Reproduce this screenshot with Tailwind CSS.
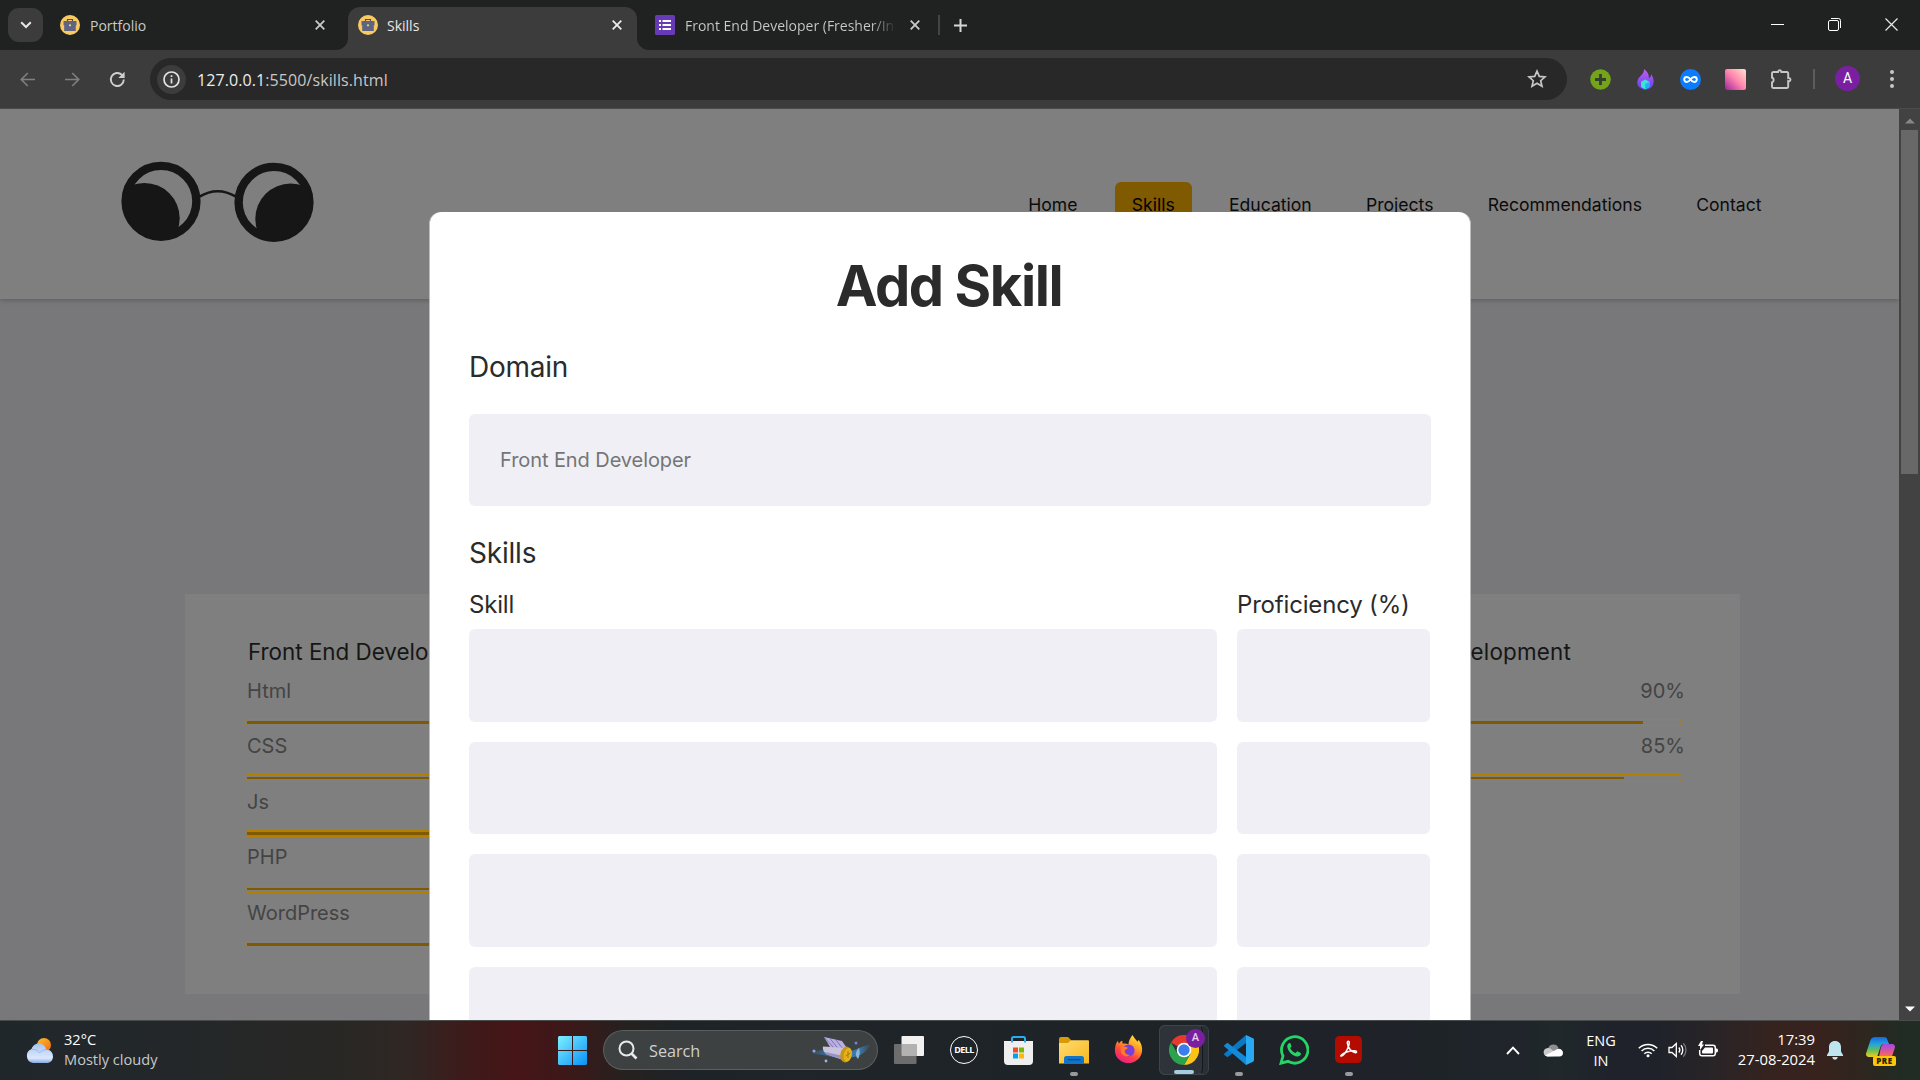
<!DOCTYPE html>
<html lang="en">
<head>
<meta charset="utf-8">
<title>Skills</title>
<script src="https://cdn.jsdelivr.net/npm/@tailwindcss/browser@4"></script>
</head>
<body class="flex h-[1080px] w-[1920px] flex-col overflow-hidden bg-[#3c3c3c] font-['Open_Sans','Noto_Sans',sans-serif]">

<!-- Tab strip -->
<header class="flex h-[50px] shrink-0 bg-[#202221] pl-2 text-[14px] leading-none text-[#c9cac9]">
  <button class="mt-2 flex h-[34px] w-[35px] items-center justify-center rounded-[11px] bg-[#3c3c3c]">
    <svg width="12" height="8" viewBox="0 0 12 8" fill="none" stroke="#e6e6e6" stroke-width="2"><path d="M1.2 1.2 6 6l4.800-4.800"/></svg>
  </button>
  <div class="flex h-[50px] w-[294px] items-center pl-[17px] pr-[11px]">
    <svg width="20" height="20" viewBox="0 0 20 20"><circle cx="10" cy="10" r="10" fill="#f9ca61"/><path d="M7.500 6V4.500h5V6" fill="none" stroke="#4a4f66" stroke-width="1.200"/><path d="M3.500 6h13v4.300h-.7V16H4.200v-5.700h-.7z" fill="#5f6580"/><circle cx="10" cy="10.300" r="1.100" fill="#f2d48a"/></svg>
    <span class="ml-2.5 grow pt-0.5">Portfolio</span>
    <svg class="mr-px" width="10" height="10" viewBox="0 0 10 10" stroke="#c9cac9" stroke-width="1.800"><path d="m.7.7 8.600 8.600M9.300.7.7 9.300"/></svg>
  </div>
  <div class="relative ml-[11px] mt-[7px] flex h-[43px] w-[289px] items-center rounded-t-[12px] bg-[#3c3c3c] pb-[7px] pl-[10px] pr-[15px] text-[#e8e8e8]">
    <svg class="absolute -left-3 bottom-0" width="12" height="12"><path d="M12 0v12H0A12 12 0 0 0 12 0" fill="#3c3c3c"/></svg>
    <svg class="absolute -right-3 bottom-0" width="12" height="12"><path d="M0 0v12h12A12 12 0 0 1 0 0" fill="#3c3c3c"/></svg>
    <svg width="20" height="20" viewBox="0 0 20 20"><circle cx="10" cy="10" r="10" fill="#f9ca61"/><path d="M7.500 6V4.500h5V6" fill="none" stroke="#4a4f66" stroke-width="1.200"/><path d="M3.500 6h13v4.300h-.7V16H4.200v-5.700h-.7z" fill="#5f6580"/><circle cx="10" cy="10.300" r="1.100" fill="#f2d48a"/></svg>
    <span class="ml-[9px] grow pt-0.5">Skills</span>
    <svg width="10" height="10" viewBox="0 0 10 10" stroke="#ececec" stroke-width="1.800"><path d="m.7.7 8.600 8.600M9.300.7.7 9.300"/></svg>
  </div>
  <div class="flex h-[50px] grow items-center pl-[18px]">
    <svg width="20" height="20" viewBox="0 0 20 20"><rect width="20" height="20" rx="1.500" fill="#673ab7"/><path d="M7.500 6H16M7.500 10H16M7.500 14H16" stroke="#fff" stroke-width="2"/><path d="M4 6h2M4 10h2M4 14h2" stroke="#fff" stroke-width="2"/></svg>
    <span class="ml-2.5 w-[211px] overflow-hidden whitespace-nowrap bg-linear-to-r from-[#c9cac9] from-88% to-transparent bg-clip-text pt-1.5 pb-1 text-transparent">Front End Developer (Fresher/Intern)</span>
    <svg class="ml-[14px]" width="10" height="10" viewBox="0 0 10 10" stroke="#c9cac9" stroke-width="1.800"><path d="m.7.7 8.600 8.600M9.300.7.7 9.300"/></svg>
    <div class="ml-[18px] h-5 w-0.5 bg-[#444]"></div>
    <svg class="ml-[14px]" width="13" height="13" viewBox="0 0 13 13" stroke="#d6d6d6" stroke-width="2"><path d="M6.500 0v13M0 6.500h13"/></svg>
  </div>
  <div class="mr-[22px] flex h-[49px] items-center gap-[44px]">
    <svg width="13" height="13" viewBox="0 0 13 13" stroke="#fff" stroke-width="1"><path d="M0 6.500h13"/></svg>
    <svg width="13" height="13" viewBox="0 0 13 13" fill="none" stroke="#fff"><path d="M3 .5h7.500a2 2 0 0 1 2 2V10"/><rect x=".5" y="2.500" width="10" height="10" rx="1.500"/></svg>
    <svg width="13" height="13" viewBox="0 0 13 13" stroke="#e8e8e8" stroke-width="1.200"><path d="m.5.5 12 12M12.500.5l-12 12"/></svg>
  </div>
</header>

<!-- Address bar -->
<div class="flex h-[59px] shrink-0 items-center border-b border-[#4b4b4b] bg-[#3c3c3c] pl-5 pr-6">
  <svg width="15" height="15" viewBox="0 0 15 15" fill="none" stroke="#7f7f7f" stroke-width="1.700"><path d="M15 7.500H1.500M7.800 1 1.300 7.500 7.800 14"/></svg>
  <svg class="ml-[30px]" width="15" height="15" viewBox="0 0 15 15" fill="none" stroke="#7f7f7f" stroke-width="1.700"><path d="M0 7.500h13.500M7.200 1l6.500 6.500L7.200 14"/></svg>
  <svg class="ml-[29px]" width="17" height="17" viewBox="0 0 17 17"><path d="M14.800 8.600a6.500 6.500 0 1 1-2-4.800L14.500 5.600" fill="none" stroke="#cfcfcf" stroke-width="1.900"/><path d="M15.600.8v6.300H9.300z" fill="#cfcfcf"/></svg>
  <div class="ml-[24px] flex h-[42px] w-[1417px] items-center rounded-full bg-[#282828] pl-[7px] pr-[20px]">
    <div class="flex size-[29px] items-center justify-center rounded-full bg-[#3c3c3c]">
      <svg width="17" height="17" viewBox="0 0 17 17" fill="none" stroke="#e3e3e3" stroke-width="1.700"><circle cx="8.500" cy="8.500" r="7.500"/><path d="M8.500 7.500v5M8.500 4.300V6"/></svg>
    </div>
    <span class="ml-[11px] grow pt-px text-[16px] leading-none tracking-[.09px] text-[#c7c7c7]"><span class="text-[#ededed]">127.0.0.1</span>:5500/skills.html</span>
    <svg width="20" height="20" viewBox="0 0 20 20" fill="none" stroke="#c7c7c7" stroke-width="1.700"><path d="m10 2.200 2.300 5.200 5.700.5-4.300 3.800 1.300 5.600-5-3-5 3 1.300-5.600L2 7.900l5.700-.5z"/></svg>
  </div>
  <svg class="ml-[23px]" width="21" height="21" viewBox="0 0 21 21"><circle cx="10.500" cy="10.500" r="10.300" fill="#74a31b"/><path d="M10.500 5v11M5 10.500h11" stroke="#33402a" stroke-width="2.800"/></svg>
  <svg class="ml-[26px]" width="17" height="21" viewBox="0 0 17 21"><defs><linearGradient id="fl" x1="0" y1="0" x2="0" y2="1"><stop offset="0" stop-color="#c65cf0"/><stop offset="1" stop-color="#5a45ee"/></linearGradient></defs><path d="M7 0c3 2 5 5 5 9 1.500-.5 2.200-2 2.200-4 2 3.500 2.800 6 2.300 9-.6 4-3.700 6.500-8 6.500S.6 18 .3 14C0 10.500 2 8.500 4 6.500 6 4.500 7.300 2.500 7 0" fill="url(#fl)"/><path d="m8.200 10.500 4.300 2.200v5.300l-4.300 2.500L4 18v-5.300z" fill="#3ee0dc"/><path d="m8.200 15 4.300-2.300V18l-4.300 2.500z" fill="#27aee8"/></svg>
  <svg class="ml-[26px]" width="21" height="21" viewBox="0 0 21 21"><circle cx="10.500" cy="10.500" r="10.500" fill="#0a7cff"/><path d="M10.500 10.500C9.200 8.500 8 8 6.700 8a2.500 2.500 0 0 0 0 5c1.300 0 2.500-.6 3.800-2.500S13 8 14.300 8a2.500 2.500 0 0 1 0 5c-1.300 0-2.500-.6-3.800-2.500" fill="none" stroke="#fff" stroke-width="1.900"/></svg>
  <div class="ml-[24px] size-[21px] rounded-[2px] bg-linear-to-tr from-[#a3129e] via-[#ff85ac] via-50% to-[#ffe1cf]"></div>
  <svg class="ml-[24px] mb-px" width="22" height="22" viewBox="0 0 22 22" fill="none" stroke="#c7c7c7" stroke-width="1.900"><path d="M3 4h5a1.700 1.700 0 1 1 3.400 0H17a1.200 1.200 0 0 1 1.200 1.200V10a1.700 1.700 0 1 1 0 3.200v5.600A1.200 1.200 0 0 1 17 20H3.200A1.200 1.200 0 0 1 2 18.800v-4.300a2.700 2.700 0 0 0 0-5V5.200A1.200 1.200 0 0 1 3.200 4"/></svg>
  <div class="ml-[21px] h-5 w-0.5 bg-[#5c5c5c]"></div>
  <div class="ml-[20px] mb-px flex size-[25px] items-center justify-center rounded-full bg-[#7b1fa2] font-[Roboto] text-[14px] text-white">A</div>
  <svg class="ml-auto mr-[2px]" width="4" height="18" viewBox="0 0 4 18" fill="#c7c7c7"><circle cx="2" cy="2" r="2"/><circle cx="2" cy="9" r="2"/><circle cx="2" cy="16" r="2"/></svg>
</div>

<!-- Page viewport -->
<div class="flex h-[911px] shrink-0">
  <main class="relative h-[911px] w-[1899px] overflow-hidden bg-[#78787a] font-[Inter,sans-serif]">
    <div class="flex h-[190px] items-center bg-[#7f7f7f] pl-[120px] pr-[120.500px] shadow-[0_1px_5px_rgba(0,0,0,.25)]">
      <svg width="196" height="82" viewBox="0 0 196 82" class="mb-[4px]">
        <defs><clipPath id="lensL"><circle cx="41" cy="40.300" r="38"/></clipPath><clipPath id="lensR"><circle cx="154" cy="41.300" r="38"/></clipPath></defs>
        <g fill="none" stroke="#161616"><circle cx="41" cy="40.300" r="35.400" stroke-width="8.400"/><circle cx="154" cy="41.300" r="35.400" stroke-width="8.400"/><path d="M79.500 35.600q18-10.800 36.500 0" stroke-width="2.600"/></g>
        <g fill="#161616"><circle cx="24.300" cy="57.300" r="35.400" clip-path="url(#lensL)"/><circle cx="170.700" cy="57.900" r="35.400" clip-path="url(#lensR)"/></g>
      </svg>
      <nav class="ml-auto mt-[2px] flex items-center gap-[20.200px] text-[17.6px] leading-none text-[#0b0b0b]">
        <a class="px-[17px] py-[14px]">Home</a>
        <a class="rounded-[6px] bg-[#805a00] px-[17px] py-[14px] text-black">Skills</a>
        <a class="px-[17px] py-[14px]">Education</a>
        <a class="px-[17px] py-[14px]">Projects</a>
        <a class="px-[17px] py-[14px]">Recommendations</a>
        <a class="px-[17px] py-[14px]">Contact</a>
      </nav>
    </div>

    <section class="ml-[185px] mt-[295px] flex h-[400px] w-[1555px] justify-between bg-[#7f7f7f] pl-[60px] pr-[57px] pt-[44px] text-[20px] text-[#444]">
      <div class="w-[380px]">
        <h2 class="pl-[3px] text-[22.4px] leading-[28px] text-[#161616]">Front End Development</h2>
        <div id="frontend" class="pt-[13px]"></div>
      </div>
      <div class="w-[380px]">
        <h2 class="pr-[112px] text-right text-[22.4px] leading-[28px] tracking-[.2px] text-[#161616]">Back End Development</h2>
        <div id="backend" class="pt-[13px]"></div>
      </div>
    </section>

    <!-- Add-skill dialog -->
    <div class="absolute left-[429px] top-[103px] h-[900px] w-[1042px] rounded-t-[12px] border-x border-[#bcbcbc] bg-white px-[39px] pt-[34px] text-[#2b2b2b]">
      <h1 class="flex h-20 items-center justify-center pr-[2px] text-[56px] font-bold tracking-tight text-[#2b2b2b]">Add Skill</h1>
      <label class="mt-[24px] block h-[34px] text-[28px] leading-[34px] tracking-[-.25px]">Domain</label>
      <div class="mt-[30px] flex h-[92px] items-center rounded-[6px] bg-[#f0eff5] px-[31px] text-[20px] tracking-[-.08px] text-[#757575]">Front End Developer</div>
      <h3 class="mt-[30px] h-[34px] text-[28px] leading-[34px] tracking-[-.2px]">Skills</h3>
      <div class="mt-[20px] grid grid-cols-[748px_193px] gap-x-5 text-[24px] leading-[30px] tracking-[-.18px]"><span>Skill</span><span>Proficiency (%)</span></div>
      <div class="mt-[9px] grid auto-rows-[92.600px] grid-cols-[748px_193px] gap-5">
        <div class="rounded-[6px] bg-[#f0eff5]"></div><div class="rounded-[6px] bg-[#f0eff5]"></div>
        <div class="rounded-[6px] bg-[#f0eff5]"></div><div class="rounded-[6px] bg-[#f0eff5]"></div>
        <div class="rounded-[6px] bg-[#f0eff5]"></div><div class="rounded-[6px] bg-[#f0eff5]"></div>
        <div class="rounded-[6px] bg-[#f0eff5]"></div><div class="rounded-[6px] bg-[#f0eff5]"></div>
      </div>
    </div>
  </main>

  <!-- Scrollbar -->
  <div class="flex w-[21px] flex-col items-center bg-[#424242] pt-[9px] pb-[8px]">
    <svg width="10" height="6" viewBox="0 0 10 6" fill="#868686"><path d="m5 .5 5 5H0z"/></svg>
    <div class="mt-[6px] h-[344px] w-[17px] bg-[#686868]"></div>
    <svg class="mt-auto" width="10" height="6" viewBox="0 0 10 6" fill="#fff"><path d="m5 5.500 5-5H0z"/></svg>
  </div>
</div>

<!-- Taskbar -->
<footer class="flex h-[60px] shrink-0 items-center border-t border-[#4a4c4c] bg-linear-to-r from-[#20272b] from-0% via-[#1e2328] via-60% to-[#1f2229] to-100%">
  <div class="flex h-full w-[780px] items-center bg-[linear-gradient(90deg,#20272b_0%,#23272a_20%,#282725_42%,#2f2724_52%,#3e1a1a_60%,#461517_66%,#3c1819_73%,#26211f_80%,#1e2327_87%,#1e2428_100%)] pl-[25px]">
    <svg width="32" height="28" viewBox="0 0 32 28"><defs><linearGradient id="cl" x1="0" y1="0" x2="0" y2="1"><stop offset="0" stop-color="#a9c4f2"/><stop offset=".75" stop-color="#dbe8fc"/><stop offset="1" stop-color="#86a9e0"/></linearGradient><linearGradient id="su" x1="0" y1="0" x2="1" y2="1"><stop offset="0" stop-color="#f9bf2e"/><stop offset="1" stop-color="#f26a11"/></linearGradient></defs><circle cx="19" cy="8" r="7" fill="url(#su)"/><path d="M8 26a7.300 7.300 0 0 1-1.500-14C8 8 11 6.500 13.500 6.500c4 0 7 2.500 7.700 6.200C26 12.500 28 16 28 19.500c0 3.800-2.500 6.500-6.500 6.500z" fill="url(#cl)"/><path d="M7 12.500c4-.5 6 1 7.500 3.500 1.500-2 4-3.500 6.700-3.300" stroke="#8eaee6" stroke-width=".8" fill="none"/></svg>
    <div class="mb-[4px] ml-[7px] flex flex-col text-[14.600px] leading-[20px]"><span class="text-white">32°C</span><span class="text-[#c8c8c8]">Mostly cloudy</span></div>
    <svg class="ml-auto" width="29" height="29" viewBox="0 0 29 29"><defs><linearGradient id="wn" x1="0" y1="0" x2="1" y2="1"><stop offset="0" stop-color="#7df0ff"/><stop offset="1" stop-color="#0a91f7"/></linearGradient></defs><path d="M1 0h13v14H0V1zM15 0h13l1 1v13H15zM0 15h14v14H1l-1-1zM15 15h14v13l-1 1H15z" fill="url(#wn)"/></svg>
    <div class="mb-px ml-[16px] flex h-[40px] w-[177px] items-center rounded-l-full border border-r-0 border-[#5b5e5f] bg-[#3d4142] pl-[14px]">
      <svg width="20" height="20" viewBox="0 0 20 20" fill="none" stroke="#e8e8e8" stroke-width="2"><circle cx="8.500" cy="8.500" r="7"/><path d="m13.500 13.500 5 5" stroke-width="2.600"/></svg>
      <span class="ml-[11px] pt-0.5 text-[16.200px] leading-none text-[#d0d0d0]">Search</span>
    </div>
  </div>
  <div class="mb-px flex h-[40px] w-[98px] items-center justify-end rounded-r-full border border-l-0 border-[#5b5e5f] bg-[#3d4142] pr-[4px]">
    <svg width="62" height="32" viewBox="0 0 62 32"><defs><linearGradient id="sw" x1="0" x2="1"><stop offset="0" stop-color="#2f6fa0" stop-opacity=".3"/><stop offset=".3" stop-color="#3a77a8"/><stop offset=".8" stop-color="#3c79ab"/><stop offset="1" stop-color="#3c79ab" stop-opacity="0"/></linearGradient></defs>
      <path d="M2 18c10-4 20 0 28 1s20-7 30-9c-4 9-14 14-26 14-14 0-20-4-32-4z" fill="url(#sw)"/>
      <path d="m13 3 18 4 7 10-19-4z" fill="#b9b0e0"/><path d="m13 3 9 10M19 4.500l8 10M25 6l7 9" stroke="#7f78b5" stroke-width="1"/>
      <path d="M12 12.500 35 14l-3 12-17-6q-4-4-3-7.500z" fill="#c9c3dd"/><path d="m14 18 19 4-1 4-17-6z" fill="#9a92c0"/>
      <ellipse cx="35" cy="20.500" rx="5.500" ry="8" fill="#c8960f" transform="rotate(12 35 20)"/><ellipse cx="37" cy="20.800" rx="4" ry="7" fill="#e3b21d" transform="rotate(12 37 20)"/><path d="M37 17v7M34.500 22l5-3" stroke="#a87c08" stroke-width="1"/>
      <path d="M48 14c-4 4-4 8-1 11 2-3 2-7 1-11" fill="#86b6d8"/><circle cx="3" cy="17" r="1.600" fill="#8aa6ea"/><circle cx="45" cy="9" r="1.500" fill="#6a86cf"/><circle cx="15" cy="27" r="1.400" fill="#9bb4ee"/></svg>
  </div>
  <svg class="ml-[16px] mb-px" width="30" height="28" viewBox="0 0 30 28"><rect x="7.500" y="0" width="22.500" height="20" rx="1" fill="#f1f1f1"/><rect x="0" y="8" width="22.500" height="20" rx="1" fill="#6d6d6d"/><path d="M7.500 8h15v12h-14a1 1 0 0 1-1-1z" fill="#b2b2b2"/></svg>
  <div class="ml-[26px] mb-px flex size-[28px] items-center justify-center rounded-full border-[1.500px] border-white text-[9px] font-bold tracking-[-.6px] text-white">DELL</div>
  <svg class="ml-[26px]" width="29" height="30" viewBox="0 0 29 30"><path d="M8 7V2.500A1.500 1.500 0 0 1 9.500 1h10A1.500 1.500 0 0 1 21 2.500V7" fill="none" stroke="#27aef0" stroke-width="2"/><path d="M0 5h29v20a4 4 0 0 1-4 4H4a4 4 0 0 1-4-4z" fill="#efefef"/><path d="M7 5h2M20 5h2" stroke="#27aef0" stroke-width="3"/><path d="M9 11.500h5v5H9z" fill="#f04e22"/><path d="M15 11.500h5v5h-5z" fill="#7db900"/><path d="M9 17.500h5v5H9z" fill="#00a2ee"/><path d="M15 17.500h5v5h-5z" fill="#fdb809"/></svg>
  <div class="relative ml-[26px] h-[60px] w-[30px] pt-[16px]">
    <svg width="30" height="27" viewBox="0 0 30 27"><defs><linearGradient id="fo" x1="0" y1="0" x2="1" y2="1"><stop offset="0" stop-color="#ffdc72"/><stop offset="1" stop-color="#f8b71c"/></linearGradient></defs><path d="M0 2a2 2 0 0 1 2-2h7l3 3v5H0z" fill="#d99a07"/><path d="M0 6h9l3-2.700h17a1 1 0 0 1 1 1V26.500H0z" fill="url(#fo)"/><path d="M5 27v-5.500a2.500 2.500 0 0 1 2.500-2.500h15a2.500 2.500 0 0 1 2.500 2.500V27z" fill="#1074c9"/><path d="M8.500 22.700h13" stroke="#0a4d8c" stroke-width="1.200"/></svg>
    <div class="absolute bottom-[5px] left-[11px] h-[4px] w-[8px] rounded-full bg-[#9a9a9a]"></div>
  </div>
  <svg class="ml-[25px] mb-[2px]" width="29" height="29" viewBox="0 0 30 30"><defs><linearGradient id="ff" x1=".8" y1="0" x2=".3" y2="1"><stop offset="0" stop-color="#ffe64a"/><stop offset=".4" stop-color="#ff9a1f"/><stop offset=".7" stop-color="#ff4045"/><stop offset="1" stop-color="#e81f88"/></linearGradient></defs><path d="M19 0c2 3 3 4 5.500 7l1-2c3 4 4 8 3.500 12-1 7-7 12-14 12S1.500 24 1 17C.7 13 1.500 9 4 6l1 3c1-1.500 2-2.500 3.500-3L9 9c2-.5 4 0 6 .5C15 6 17 3 19 0" fill="url(#ff)"/><circle cx="15" cy="16" r="6.300" fill="#7a3fd8"/><path d="M7 12c3 0 5 0 7.500 1.500L11 16c0 3 2.500 5 5.500 4.500C13 24 8 21 7 17z" fill="#ff7a22"/></svg>
  <div class="relative mb-px ml-[16px] h-[50px] w-[50px]">
    <div class="absolute inset-0 rounded-[6px] border border-[#3a4045] bg-[#292f34]"></div>
    <div class="absolute inset-y-0 left-0 w-[44px] rounded-[6px] border border-[#3e4449] border-r-[#14181b] bg-[#2d3338]"></div>
    <svg class="absolute left-[10px] top-[10px]" width="30" height="30" viewBox="0 0 30 30"><path d="M15 15 2 7.500A15 15 0 0 1 28 7.500z" fill="#e53b2f"/><path d="M15 15 28 7.500A15 15 0 0 1 15 30l6.500-11.200z" fill="#fbc417"/><path d="M21.500 18.800 15 30A15 15 0 0 1 2 7.500l6.500 11.300z" fill="#2ba24c"/><path d="M15 8h13.200A15 15 0 0 1 30 15a15 15 0 0 1-.3 2.500L21 17z" fill="#fbc417"/><circle cx="15" cy="15" r="7.300" fill="#fff"/><circle cx="15" cy="15" r="5.700" fill="#3b7ded"/></svg>
    <div class="absolute left-[27px] top-[4px] flex size-[19px] items-center justify-center rounded-full bg-[#7b1fa2] font-[Roboto] text-[11px] font-medium text-[#e6d0ee]">A</div>
    <div class="absolute bottom-[1px] left-[15px] h-[4px] w-[20px] rounded-full bg-[#a3cde0]"></div>
  </div>
  <div class="relative ml-[15px] h-[60px] w-[30px] pt-[14px]">
    <svg width="30" height="30" viewBox="0 0 30 30"><path d="M22 0v8L3.500 22.300l-2.800-2a1.300 1.300 0 0 1 0-2z" fill="#0b78c4"/><path d="M.7 9.700 3.500 7.700 22 22v8L.7 11.700a1.300 1.300 0 0 1 0-2" fill="#1389d8"/><path d="m22 0 7 3.200A1.700 1.700 0 0 1 30 4.800v20.400a1.700 1.700 0 0 1-1 1.600L22 30z" fill="#2aa9f3"/></svg>
    <div class="absolute bottom-[5px] left-[11px] h-[4px] w-[8px] rounded-full bg-[#9a9a9a]"></div>
  </div>
  <svg class="mb-px ml-[25px]" width="30" height="30" viewBox="0 0 30 30"><path d="M2 28.200 4 21A13.200 13.200 0 1 1 9 26.300z" fill="none" stroke="#25d366" stroke-width="2.800"/><path d="M10.500 8c-1.500.6-2.500 2-2.200 4 .8 5 5.500 9 9.700 9.500 2 .2 3.500-1 4-2.500l-.2-1-3.500-1.800-1.700 1.900c-2.600-.8-4.500-2.800-5.400-5l1.400-1.800L11.200 8z" fill="#25d366"/></svg>
  <div class="relative ml-[26px] h-[60px] w-[27px] pt-[15px]">
    <svg width="27" height="27" viewBox="0 0 27 27"><rect width="27" height="27" rx="4.500" fill="#b30b00"/><path d="M6 19.500c1.500-2.500 9-5 13.500-4.700 3 .2 2.500 2.200.3 1.800-3-.6-7-4.500-7.500-9.600-.1-2.200 2.200-2.200 2 0-.3 4.500-4 10.500-6.500 12.500-1.200.8-2.500.6-1.800 0z" fill="none" stroke="#fff" stroke-width="1.500"/></svg>
    <div class="absolute bottom-[5px] left-[10px] h-[4px] w-[8px] rounded-full bg-[#9a9a9a]"></div>
  </div>
  <div class="ml-[58px] flex h-full w-[500px] items-center bg-[linear-gradient(90deg,#1e2328_0%,#1f252a_20%,#20282a_27%,#1f222a_38%,#20222a_48%,#282427_58%,#35231f_70%,#38221d_80%,#2c271f_90%,#202c24_97%,#202c24_100%)] pl-[86px]">
    <svg width="14" height="9" viewBox="0 0 14 9" fill="none" stroke="#fff" stroke-width="1.900"><path d="M1 8l6-6.300L13 8"/></svg>
    <svg class="ml-[23px] mb-px" width="20" height="14" viewBox="0 0 20 14"><path d="M5 6A5.500 5.500 0 0 1 15.500 5l-4 4z" fill="#8e8e8e"/><path d="M4.500 13.500a4.200 4.200 0 0 1-.5-8.300c2-.4 4 .3 5 1.800l5 3-2 3z" fill="#c9c9c9"/><path d="M2 12.500 13 6.700c3-2.500 7-.2 7 3a3.700 3.700 0 0 1-3.700 3.800H4.500z" fill="#fff"/></svg>
    <div class="ml-[23px] w-[30px] text-center text-[14.500px] leading-[20px] text-white">ENG<br>IN</div>
    <svg class="mb-[2px] ml-[22px]" width="20" height="16" viewBox="0 0 20 16" fill="none" stroke="#fff" stroke-width="1.500"><path d="M.8 6.200a13 13 0 0 1 18.400 0M3.600 9a9 9 0 0 1 12.800 0M6.300 11.700a5.200 5.200 0 0 1 7.400 0"/><circle cx="10" cy="13.700" r="1.500" fill="#fff" stroke="none"/></svg>
    <svg class="mb-px ml-[10px]" width="20" height="16" viewBox="0 0 20 16" fill="none" stroke="#fff" stroke-width="1.300"><path d="M1 5.500h3l4.300-4v13L4 10.500H1z"/><path d="M10.800 5.500a3.800 3.800 0 0 1 0 5M13 3.300a7 7 0 0 1 0 9.400"/><path d="M15.300 1.200a10 10 0 0 1 0 13.600" stroke="#777"/></svg>
    <svg class="mb-[3px] ml-[10px]" width="20" height="17" viewBox="0 0 20 17"><path d="M7 4.200h8A2.300 2.300 0 0 1 17.300 6.500v6a2.300 2.300 0 0 1-2.300 2.300H4a2.300 2.300 0 0 1-2.300-2.300V9" fill="none" stroke="#fff" stroke-width="1.500"/><path d="M7 6.500h7a1 1 0 0 1 1 1v4a1 1 0 0 1-1 1H4.800a1 1 0 0 1-.8-1V10zM18 7.500c1.500 0 2 .6 2 2s-.5 2-2 2zM3 0 0 5h2v4l4-5.500H4L5 0z" fill="#fff"/></svg>
    <div class="mb-[4px] ml-[17px] w-[80px] text-right text-[14.800px] leading-[20px] text-white">17:39<br>27-08-2024</div>
    <svg class="ml-[12px]" width="16" height="19" viewBox="0 0 16 19" fill="#bfe6ee"><path d="M8 0c3.700 0 6 2.600 6 6v4.500l2 3.500v1H0v-1l2-3.500V6c0-3.400 2.300-6 6-6M5.300 16h5.400c-.3 1.700-1.300 2.700-2.700 2.700S5.600 17.700 5.300 16"/></svg>
    <div class="relative ml-[23px] h-[30px] w-[30px]">
      <svg width="30" height="24" viewBox="0 0 30 24"><defs><linearGradient id="c1" x1="0" y1="0" x2="0" y2="1"><stop offset="0" stop-color="#1768e0"/><stop offset=".35" stop-color="#22a3dd"/><stop offset=".65" stop-color="#63bd5b"/><stop offset="1" stop-color="#f3cc1d"/></linearGradient><linearGradient id="c2" x1="0" y1="0" x2="0" y2="1"><stop offset="0" stop-color="#a14be8"/><stop offset=".6" stop-color="#e0568f"/><stop offset="1" stop-color="#f7784b"/></linearGradient></defs><path d="M9 1h9c2 0 3 1 3.500 3L23 8h-5c-2 0-3 1-3.600 3l-2.600 8c-.5 1.500-1.500 2-3 2H3c-2.500 0-3.500-2-2.800-4L4.500 4C5.300 2 7 1 9 1" fill="url(#c1)"/><path d="M18 8h8c2.500 0 3.500 2 2.800 4l-3 9H13l1.500-8c.6-3 1.500-5 3.500-5" fill="url(#c2)"/></svg>
      <div class="absolute bottom-0 left-[7px] flex h-[10px] w-[23px] items-center justify-center rounded-[2px] bg-[#fdc60a] text-[8px] leading-none font-extrabold tracking-[.5px] text-[#2b2100]">PRE</div>
    </div>
  </div>
</footer>

<script>
  // Builds one labelled progress row per skill; rows alternate between 55px and 56px to keep bars on whole pixels.
  function renderSkills(id, skills) {
    document.getElementById(id).innerHTML = skills.map(([name, value], i) => `
      <div class="${i % 2 ? 'h-[56px]' : 'h-[55px]'}">
        <div class="flex justify-between pl-[2px] leading-[24px]"><span>${name}</span><span class="-mr-[2px]">${value}%</span></div>
        <div class="mt-[16px] mr-px rounded-[3px] border border-[#b58000] px-px ${i % 2 ? 'h-[8px] pt-[2px]' : 'h-[7px] pt-px'}"><div class="bg-[#805a00] ${i % 2 ? 'h-[2px]' : 'h-[3px]'}" style="width:${value}%"></div></div>
      </div>`).join('');
  }
  renderSkills('frontend', [['Html', 90], ['CSS', 85], ['Js', 80], ['PHP', 75], ['WordPress', 80]]);
  renderSkills('backend', [['Node', 90], ['SQL', 85]]);
</script>
</body>
</html>
